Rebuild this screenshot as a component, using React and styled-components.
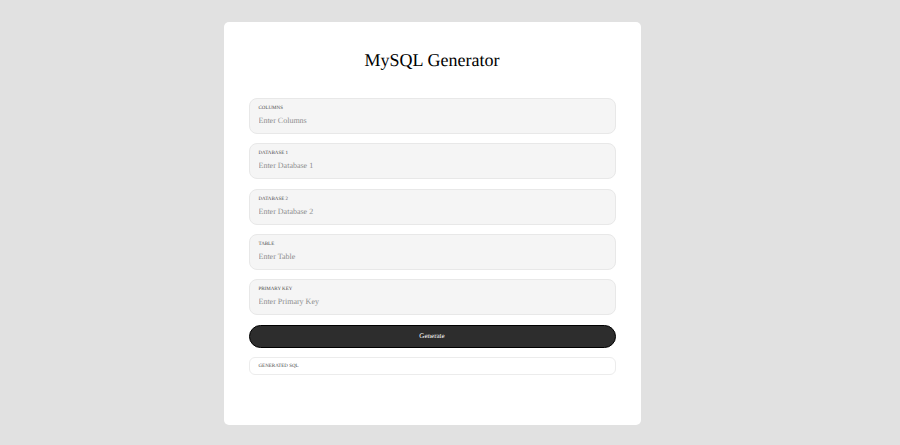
import React from "react";
import styled, { createGlobalStyle } from "styled-components";

const GlobalStyle = createGlobalStyle`
  * { box-sizing: border-box; }
  body {
    margin: 0;
    background: #e1e1e1;
    font-family: "Liberation Serif", "Times New Roman", serif;
    color: #000;
    text-rendering: geometricPrecision;
  }
`;

const Page = styled.main`
  display: flex;
  justify-content: center;
  min-height: 100vh;
  padding: 22px 36px 20px 0;
`;

const Card = styled.form`
  display: flex;
  flex-direction: column;
  width: 100%;
  max-width: 417px;
  padding: 26px 25px 50px;
  background: #fff;
  border-radius: 5px;
`;

const Title = styled.h1`
  margin: 0 0 26px;
  font-size: 18px;
  line-height: 24px;
  font-weight: 400;
  text-align: center;
`;

const Stack = styled.div`
  flex: 1;
  display: flex;
  flex-direction: column;
  justify-content: space-between;
  gap: 9px;
`;

const Field = styled.label`
  display: block;
  padding: 6px 9px 4px;
  background: #f5f5f5;
  border: 1px solid #e8e8e8;
  border-radius: 8px;
`;

const Caption = styled.span`
  display: block;
  font-size: 5px;
  line-height: 8px;
  text-transform: uppercase;
  color: #444;
`;

const TextInput = styled.input`
  display: block;
  width: 100%;
  height: 16px;
  padding: 0;
  border: 0;
  outline: 0;
  background: transparent;
  font-family: inherit;
  font-size: 8px;
  line-height: 16px;
  text-rendering: inherit;
  &::placeholder { color: #8e8e8e; opacity: 1; }
`;

const GenerateButton = styled.button`
  height: 23px;
  padding: 0;
  border: 1px solid #000;
  border-radius: 12px;
  background: #2d2d2d;
  color: #fff;
  font-family: inherit;
  font-size: 7px;
  text-rendering: inherit;
`;

const Result = styled.output`
  display: block;
  padding: 5px 9px 3px;
  border: 1px solid #ececec;
  border-radius: 6px;
`;

const fields = ["Columns", "Database 1", "Database 2", "Table", "Primary Key"];

export default function App() {
  return (
    <Page>
      <GlobalStyle />
      <Card onSubmit={(e) => e.preventDefault()}>
        <Title>MySQL Generator</Title>
        <Stack>
          {fields.map((name) => (
            <Field key={name}>
              <Caption>{name}</Caption>
              <TextInput placeholder={`Enter ${name}`} />
            </Field>
          ))}
          <GenerateButton type="submit">Generate</GenerateButton>
          <Result>
            <Caption>Generated SQL</Caption>
          </Result>
        </Stack>
      </Card>
    </Page>
  );
}
